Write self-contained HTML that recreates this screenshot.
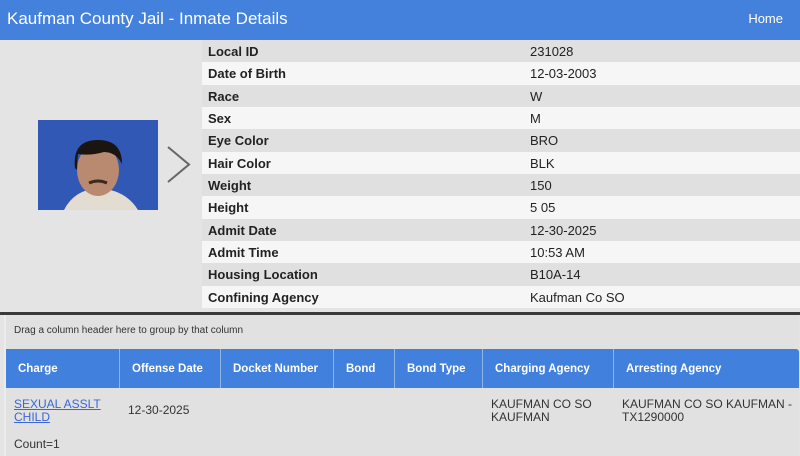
<!DOCTYPE html>
<html><head><style>
*{margin:0;padding:0;box-sizing:border-box}
body{width:800px;height:456px;overflow:hidden;background:#e4e4e4;font-family:"Liberation Sans",Arial,sans-serif;position:relative}
.hdr{position:absolute;left:0;top:0;width:800px;height:40px;background:#4381dc;color:#fff}
.hdr .t{position:absolute;left:7px;top:9px;font-size:17px}
.hdr .h{position:absolute;right:17px;top:11px;font-size:13px}
.info{position:absolute;left:202px;top:40px;width:598px}
.info div{height:22.35px;font-size:13px;color:#222;position:relative}
.info div:nth-child(odd){background:#e0e0e0}
.info div:nth-child(even){background:#f6f6f6}
.info b{position:absolute;left:6px;top:4px}
.info span{position:absolute;left:328px;top:4px}
.photo{position:absolute;left:38px;top:120px;width:120px;height:90px;background:#3058b4;overflow:hidden}
.line{position:absolute;left:0;top:312px;width:800px;height:3px;background:#3a3a3a}
.panel{position:absolute;left:4px;top:315px;width:795px;height:141px;background:#e1e1e1;border-left:2px solid #ececec}
.grp{position:absolute;left:14px;top:325px;font-size:10px;color:#333}
.th{position:absolute;top:349px;height:39px;background:#4180dc;color:#fff;font-size:11.5px;font-weight:bold;border-right:1px solid #8fb3ea}
.th span{position:absolute;left:12px;top:14px}
.td{position:absolute;font-size:12px;color:#333;line-height:13px}
</style></head><body>
<div class="hdr"><div class="t">Kaufman County Jail - Inmate Details</div><div class="h">Home</div></div>
<div class="photo"><svg width="120" height="90">
<path d="M26 90 Q36 70 60 68 Q88 70 100 90Z" fill="#e2ddd0"/>
<ellipse cx="60" cy="50" rx="21" ry="26" fill="#b98a70"/>
<path d="M37 48 Q34 20 60 20 Q84 20 84 44 Q78 32 66 32 Q52 36 40 34 Q39 42 39 50Z" fill="#1b1512"/>
<path d="M51 63 Q60 59 69 63" stroke="#3a2a22" stroke-width="3" fill="none"/>
</svg></div>
<svg style="position:absolute;left:164px;top:144px" width="32" height="42"><path d="M4 3 L25 20.5 L4 38" stroke="#666" stroke-width="2" fill="none"/></svg>
<div class="info">
<div><b>Local ID</b><span>231028</span></div>
<div><b>Date of Birth</b><span>12-03-2003</span></div>
<div><b>Race</b><span>W</span></div>
<div><b>Sex</b><span>M</span></div>
<div><b>Eye Color</b><span>BRO</span></div>
<div><b>Hair Color</b><span>BLK</span></div>
<div><b>Weight</b><span>150</span></div>
<div><b>Height</b><span>5 05</span></div>
<div><b>Admit Date</b><span>12-30-2025</span></div>
<div><b>Admit Time</b><span>10:53 AM</span></div>
<div><b>Housing Location</b><span>B10A-14</span></div>
<div><b>Confining Agency</b><span>Kaufman Co SO</span></div>
</div>
<div class="line"></div>
<div class="panel"></div>
<div class="grp">Drag a column header here to group by that column</div>
<div class="th" style="left:6px;width:114px"><span>Charge</span></div>
<div class="th" style="left:120px;width:101px"><span>Offense Date</span></div>
<div class="th" style="left:221px;width:113px"><span>Docket Number</span></div>
<div class="th" style="left:334px;width:61px"><span>Bond</span></div>
<div class="th" style="left:395px;width:88px"><span>Bond Type</span></div>
<div class="th" style="left:483px;width:131px"><span>Charging Agency</span></div>
<div class="th" style="left:614px;width:185px;border-right:none;border-radius:0 3px 0 0"><span>Arresting Agency</span></div>
<div class="td" style="left:14px;top:398px;color:#3a66d8;text-decoration:underline">SEXUAL ASSLT<br>CHILD</div>
<div class="td" style="left:128px;top:404px">12-30-2025</div>
<div class="td" style="left:491px;top:398px">KAUFMAN CO SO<br>KAUFMAN</div>
<div class="td" style="left:622px;top:398px">KAUFMAN CO SO KAUFMAN -<br>TX1290000</div>
<div class="td" style="left:14px;top:438px">Count=1</div>
</body></html>
